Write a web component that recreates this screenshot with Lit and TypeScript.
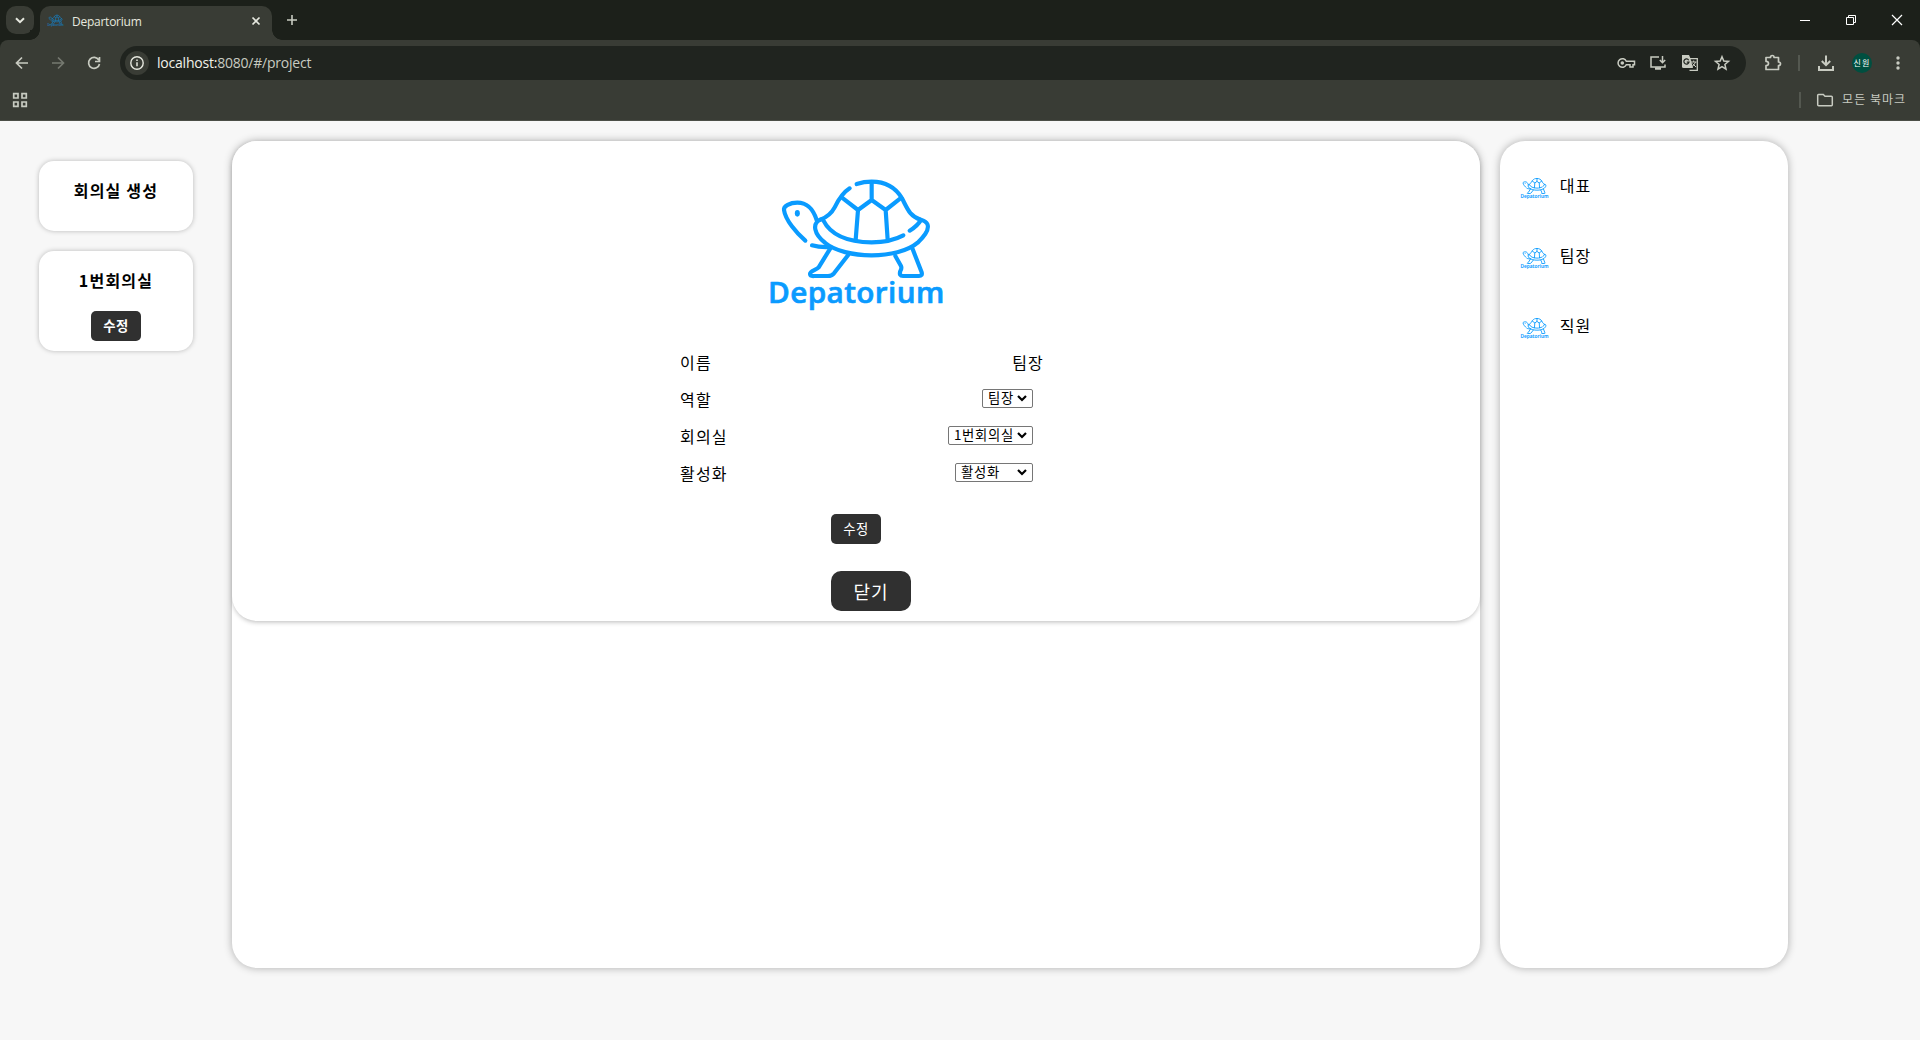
import { LitElement, html, css, svg } from "lit";
import { customElement, property, state } from "lit/decorators.js";

@customElement("turtle-logo")
class TurtleLogo extends LitElement {
  static styles = css`
    :host { display: block; flex: none; width: 230px; height: 160px; color: #0a9bff; --line: 12.5; }
    .art { display: block; width: 100%; height: 100%; fill: none; stroke: currentColor; stroke-width: var(--line); stroke-linecap: round; stroke-linejoin: round; }
    .solid { fill: currentColor; stroke: none; }
    .word { fill: currentColor; stroke: currentColor; stroke-width: 2; font: 600 89px "Open Sans", "Noto Sans", sans-serif; }
  `;
  render() {
    return html`<svg class="art" viewBox="0 0 690 480">
      <path d="M350 72Q372 65 395 65C440 65 470 88 486 115C502 145 508 168 542 179" />
      <path d="M329 85C308 98 296 118 284 142C274 161 262 171 241 179" />
      <path d="M230 180C220 150 205 128 172 128C150 128 130 138 132 150C136 180 170 220 196 242" />
      <path d="M216 256Q240 263 272 261" />
      <ellipse class="solid" cx="172" cy="160" rx="7.5" ry="10" />
      <path d="M241 179C216 190 221 222 256 249C315 297 472 300 533 248C556 226 568 205 562 192C558 183 550 181 542 179" />
      <path d="M250 181C272 225 320 246 395 247C432 247 462 241 490 226M509 212Q532 198 542 181" />
      <path d="M395 66V120L354 150L306 113M395 120L437 150L484 113M354 150L347 240M437 150L443 240" />
      <path d="M271 265L236 322C228 331 210 332 210 342Q211 349 222 348H264Q275 348 282 340L324 286" />
      <path d="M466 288L483 318Q486 325 481 333Q476 348 489 348H537Q548 348 545 337L517 265" />
      <text class="word" x="84" y="430" textLength="530" lengthAdjust="spacingAndGlyphs">Depatorium</text>
    </svg>`;
  }
}

const icons = {
  down: svg`<path d="M6 8.200l4 4 4-4" stroke-width="2"/>`,
  close: svg`<path d="M6.500 6.500l7 7M13.500 6.500l-7 7" stroke-width="1.700"/>`,
  plus: svg`<path d="M10 5v10M5 10h10" stroke-width="1.600"/>`,
  back: svg`<path d="M16 10H5M10 4.500L4.500 10l5.500 5.500" stroke-width="1.700"/>`,
  forward: svg`<path d="M4 10h11M10 4.500L15.500 10 10 15.500" stroke-width="1.700"/>`,
  reload: svg`<path d="M14.800 7A5.500 5.500 0 1 0 15.500 11M15.500 4v4.500H11" stroke-width="1.700"/>`,
  info: svg`<circle cx="10" cy="10" r="6.200" stroke-width="1.400"/><path d="M10 9.300v4M10 6.400v1.500" stroke-width="1.500"/>`,
  key: svg`<path d="M10.300 8.300A4.300 4.300 0 1 0 10.300 11.700H14V14H17V11.700H18.500V8.300Z" stroke-width="1.500"/><circle cx="6.300" cy="10" r="1.800" fill="currentColor" stroke="none"/>`,
  install: svg`<path d="M11 4H3V14H17V11.500M14.500 3v6.500M11.800 7l2.700 2.700L17.200 7" stroke-width="1.500"/><path d="M7 15.500h6" stroke-width="2.500"/>`,
  translate: svg`<path d="M2 2h7l1.500 3.500L13 15H3.500Q2 15 2 13.500Z" fill="currentColor" stroke="none"/><path d="M10 5.700h7.300V17.300H9.500" stroke-width="1.300"/><path d="M11 9h5.500M13.700 7.500V9M15.500 9Q14.500 12 11.500 14M12.500 10.500L16 14" stroke-width="1"/><path class="knock" d="M8.700 7.200A2.600 2.600 0 1 0 9 9.100H6.800" stroke-width="1.200"/>`,
  star: svg`<path d="M10 3.700l1.800 4.300 4.700.4-3.600 3.100 1.100 4.600L10 13.600 6 16.100l1.100-4.600L3.500 8.400 8.200 8Z" stroke-width="1.500" stroke-linejoin="miter"/>`,
  puzzle: svg`<path d="M3 4.500H7.500Q7.500 2.500 9.300 2.500T11 4.500H15.500V9Q17.500 9 17.500 10.700T15.500 12.500V16.500H3V12.700Q5.500 12.700 5.500 10.500T3 8.300Z" stroke-width="1.700" stroke-linejoin="round"/>`,
  download: svg`<path d="M10 2.500v9M5.800 8l4.200 4.200L14.200 8M3 13v4H17V13" stroke-width="2"/>`,
  dots: svg`<g fill="currentColor" stroke="none"><circle cx="10" cy="5" r="1.700"/><circle cx="10" cy="10" r="1.700"/><circle cx="10" cy="15" r="1.700"/></g>`,
  apps: svg`<path d="M3.700 3.700h4.300V8H3.700ZM12 3.700h4.300V8H12ZM3.700 12h4.300v4.300H3.700ZM12 12h4.300v4.300H12Z" stroke-width="1.700"/>`,
  folder: svg`<path d="M2.700 5.300V14.700Q2.700 15.700 3.700 15.700H16.500Q17.300 15.700 17.300 14.700V7.200Q17.300 6.200 16.300 6.200H10L8.300 4.500H3.500Q2.700 4.500 2.700 5.300Z" stroke-width="1.500"/>`,
  minimize: svg`<path d="M5 10.500h10" stroke-width="1"/>`,
  restore: svg`<path d="M5.500 7.500h7v7h-7ZM7.500 7.500v-2h7v7h-2" stroke-width="1"/>`,
  exit: svg`<path d="M5 5l10 10M15 5L5 15" stroke-width="1.200"/>`,
  chevron: svg`<path d="M6 8l4 4 4-4" stroke-width="2.200"/>`,
};

@customElement("ui-icon")
class UiIcon extends LitElement {
  @property() name = "";
  static styles = css`
    :host { display: block; flex: none; width: 20px; height: 20px; }
    .glyph { display: block; fill: none; stroke: currentColor; }
    .knock { stroke: #20241f; }
  `;
  render() {
    return html`<svg class="glyph" width="20" height="20" viewBox="0 0 20 20">${icons[this.name as keyof typeof icons]}</svg>`;
  }
}

@customElement("browser-frame")
class BrowserFrame extends LitElement {
  static styles = css`
    :host { display: block; height: 121px; background: #1c201a; color: #c8cbc1; font-family: "Open Sans", "Noto Sans CJK KR", sans-serif; }
    * { box-sizing: border-box; }
    .strip { display: flex; height: 40px; padding: 6px 0 0 6px; }
    .search { display: grid; place-items: center; width: 28px; height: 28px; border-radius: 10px; background: #393c35; color: #e6e8df; }
    .tab { position: relative; display: flex; align-items: center; width: 232px; height: 34px; margin-left: 6px; padding: 0 6px 5px 8px; border-radius: 10px 10px 0 0; background: #393c35; color: #e6e8df; }
    .tab::before, .tab::after { content: ""; position: absolute; bottom: 0; width: 10px; height: 10px; }
    .tab::before { left: -10px; background: radial-gradient(circle at 0 0, #1c201a 9.500px, #393c35 10px); }
    .tab::after { right: -10px; background: radial-gradient(circle at 100% 0, #1c201a 9.500px, #393c35 10px); }
    .fav { --line: 26; width: 21px; height: 15px; margin: 0 2px 0 -3px; color: #1b76b0; }
    .title { flex: 1; padding: 3px 0 0 4px; font-size: 12px; line-height: 16px; letter-spacing: -0.250px; }
    .new { margin: 4px 0 0 10px; }
    .controls { display: flex; height: 28px; margin-left: auto; color: #fff; }
    .control { display: grid; place-items: center; width: 46px; }
    .bar { display: flex; align-items: center; height: 46px; padding: 0 4px; border-radius: 8px 8px 0 0; background: #393c35; }
    .nav { display: grid; flex: none; place-items: center; width: 36px; }
    .dim { color: #757970; }
    .omni { display: flex; flex: none; align-items: center; width: 1626px; height: 34px; margin-left: 8px; padding: 0 14px 0 5px; border-radius: 17px; background: #20241f; }
    .site { display: grid; place-items: center; width: 24px; height: 24px; border-radius: 50%; background: #393c35; color: #e6e8df; }
    .url { flex: 1; margin-left: 8px; font-size: 14px; line-height: 20px; letter-spacing: -0.220px; }
    .host { color: #f0f2e9; }
    .actions { display: flex; gap: 12px; }
    .puzzle { margin-left: 17px; }
    .rule { flex: none; width: 2px; height: 16px; background: #545850; }
    .after { margin: 0 16px 0 15px; }
    .avatar { display: grid; flex: none; place-items: center; width: 20px; height: 20px; margin: 0 16px; border-radius: 50%; background: #004f40; color: #fff; font: 8px/20px "Noto Sans CJK KR", sans-serif; white-space: nowrap; }
    .marks { display: flex; align-items: center; height: 35px; padding: 0 14px 7px 10px; border-bottom: 1px solid #4b4e47; background: #393c35; }
    .marks .rule { margin: 0 15px 0 auto; }
    .marks ui-icon:nth-of-type(2) { margin-left: -1px; }
    .all { margin: -2px 0 0 7px; font: 12px/18px "Noto Sans CJK KR", sans-serif; letter-spacing: 1px; }
  `;
  render() {
    return html`
      <div class="strip">
        <div class="search"><ui-icon name="down"></ui-icon></div>
        <div class="tab"><turtle-logo class="fav"></turtle-logo><span class="title">Departorium</span><ui-icon name="close"></ui-icon></div>
        <ui-icon class="new" name="plus"></ui-icon>
        <div class="controls">${["minimize", "restore", "exit"].map((n) => html`<div class="control"><ui-icon name=${n}></ui-icon></div>`)}</div>
      </div>
      <div class="bar">
        <div class="nav"><ui-icon name="back"></ui-icon></div>
        <div class="nav dim"><ui-icon name="forward"></ui-icon></div>
        <div class="nav"><ui-icon name="reload"></ui-icon></div>
        <div class="omni">
          <div class="site"><ui-icon name="info"></ui-icon></div>
          <div class="url"><span class="host">localhost:</span>8080/#/project</div>
          <div class="actions">${["key", "install", "translate", "star"].map((n) => html`<ui-icon name=${n}></ui-icon>`)}</div>
        </div>
        <ui-icon class="puzzle" name="puzzle"></ui-icon>
        <div class="rule after"></div>
        <ui-icon name="download"></ui-icon>
        <div class="avatar">신원</div>
        <ui-icon name="dots"></ui-icon>
      </div>
      <div class="marks">
        <ui-icon name="apps"></ui-icon>
        <div class="rule"></div>
        <ui-icon name="folder"></ui-icon>
        <span class="all">모든 북마크</span>
      </div>`;
  }
}

@customElement("app-root")
class AppRoot extends LitElement {
  @state() private members = ["대표", "팀장", "직원"];
  @state() private fields = [
    { label: "역할", value: "팀장", size: "role" },
    { label: "회의실", value: "1번회의실", size: "space" },
    { label: "활성화", value: "활성화", size: "active" },
  ];
  static styles = css`
    :host { display: block; height: 1040px; overflow: hidden; background: #f7f7f7; color: #000; font: 16px/20px "Noto Sans CJK KR", sans-serif; letter-spacing: 1.200px; }
    * { box-sizing: border-box; }
    .page { display: grid; grid-template-columns: 154px 1248px 288px; height: 847px; padding: 20px 0 0 39px; }
    .rooms { display: flex; flex-direction: column; gap: 20px; padding-top: 20px; }
    .room { display: flex; flex-direction: column; align-items: center; gap: 21px; height: 70px; padding-top: 19px; border-radius: 15px; background: #fff; box-shadow: 0 0 5px rgba(0, 0, 0, 0.25); font-weight: 700; }
    .tall { height: 100px; }
    .name { height: 20px; white-space: nowrap; }
    .panel { border-radius: 25px; background: #fff; box-shadow: 0 0 8px rgba(0, 0, 0, 0.3); }
    .main { margin: 0 -39px 0 39px; }
    .detail { display: flex; flex-direction: column; align-items: center; height: 480px; padding-top: 19px; border-radius: 25px; background: #fff; box-shadow: 0 2px 5px -1px rgba(0, 0, 0, 0.28); }
    .logo { margin-left: -2px; }
    .form { width: 364px; margin-left: 12px; padding-top: 23px; }
    .row { display: flex; align-items: center; justify-content: space-between; height: 37px; }
    .pick { display: flex; align-items: center; justify-content: space-between; height: 19px; margin: 0 11px 1px 0; padding: 0 0 0 5px; border: 1px solid #767676; border-radius: 2px; background: #fff; font-size: 13.333px; line-height: 17px; letter-spacing: 0.700px; white-space: nowrap; }
    .value { margin-top: -1px; }
    .arrow { margin-left: -8px; }
    .role { width: 51px; }
    .space { width: 85px; }
    .active { width: 78px; }
    .buttons { display: flex; flex-direction: column; gap: 27px; padding: 23px 0 0 151px; }
    .btn { width: 50px; height: 30px; padding: 0; border: 0; border-radius: 5px; background: #303030; color: #fff; font: 13.333px/30px "Noto Sans CJK KR", sans-serif; letter-spacing: 0.500px; }
    .strong { font-weight: 700; }
    .big { width: 80px; height: 40px; border-radius: 10px; font-size: 18px; line-height: 38px; letter-spacing: 1px; }
    .people { margin: 0 -59px 0 59px; padding-top: 10px; }
    .person { display: flex; align-items: center; height: 70px; padding-left: 16px; }
    .person-name { margin-top: -2px; }
    .mini { --line: 17; width: 36.700px; height: 25.500px; margin: 4px 7px 0 0; }
  `;
  render() {
    return html`
      <browser-frame></browser-frame>
      <div class="page">
        <div class="rooms">
          <div class="room"><div class="name">회의실 생성</div></div>
          <div class="room tall"><div class="name">1번회의실</div><button class="btn strong">수정</button></div>
        </div>
        <div class="panel main">
          <div class="detail">
            <turtle-logo class="logo"></turtle-logo>
            <div class="form">
              <div class="row"><span>이름</span><span>팀장</span></div>
              ${this.fields.map((f) => html`<div class="row"><span>${f.label}</span>
                <div class="pick ${f.size}" role="combobox" tabindex="0"><span class="value">${f.value}</span><ui-icon class="arrow" name="chevron"></ui-icon></div></div>`)}
              <div class="buttons"><button class="btn">수정</button><button class="btn big">닫기</button></div>
            </div>
          </div>
        </div>
        <div class="panel people">
          ${this.members.map((m) => html`<div class="person"><turtle-logo class="mini"></turtle-logo><span class="person-name">${m}</span></div>`)}
        </div>
      </div>`;
  }
}
